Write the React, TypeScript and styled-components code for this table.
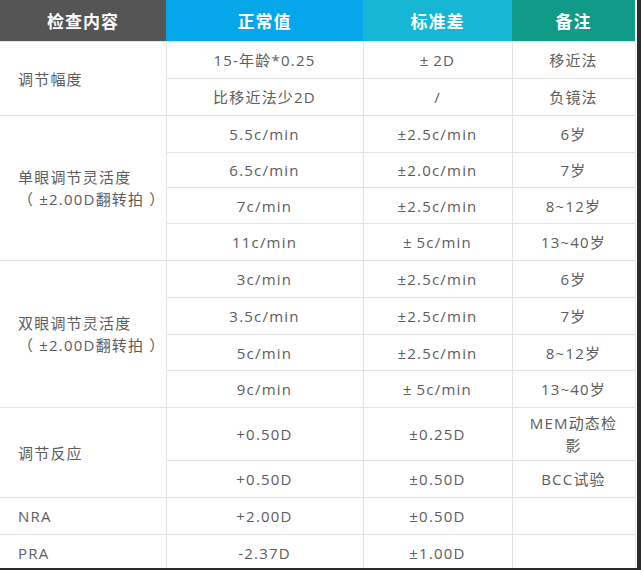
import styled, { createGlobalStyle } from "styled-components";

const GlobalStyle = createGlobalStyle`
  html, body {
    margin: 0;
    padding: 0;
    background: #ffffff;
  }
`;

const Frame = styled.div`
  width: 641px;
  height: 570px;
  box-sizing: border-box;
  border-right: 4px solid #2b2b2b;
  border-bottom: 2px solid #2b2b2b;
  padding-right: 2px;
  background: #ffffff;
  overflow: hidden;
`;

const Table = styled.table`
  width: 635px;
  border-collapse: collapse;
  table-layout: fixed;
  font-family: "Open Sans", "Noto Sans CJK SC", sans-serif;
  color: #5c5c5c;
`;

const HeadCell = styled.th<{ $bg: string }>`
  height: 41px;
  padding: 0;
  background: ${(p) => p.$bg};
  color: #ffffff;
  font-family: "Noto Sans CJK SC", sans-serif;
  font-size: 17px;
  font-weight: 700;
  letter-spacing: 1px;
  text-align: center;
  vertical-align: middle;
`;

const Cell = styled.td<{ $h?: number; $left?: boolean }>`
  height: ${(p) => p.$h ?? 37}px;
  padding: ${(p) => (p.$left ? "0 0 0 18px" : "0 6px")};
  box-sizing: border-box;
  border: 1px solid #e3e3e3;
  font-size: 15px;
  letter-spacing: 1.2px;
  line-height: 22px;
  text-align: ${(p) => (p.$left ? "left" : "center")};
  vertical-align: middle;
  &:first-child {
    border-left: none;
  }
`;

type Row = { normal: string; sd: string; note: string; h?: number };
type Group = { label: string[]; rows: Row[] };

// thin space after the ± where the source spreads it out
const T = "\u2009";

const groups: Group[] = [
  {
    label: ["调节幅度"],
    rows: [
      { normal: "15-年龄*0.25", sd: `±${T}2D`, note: "移近法" },
      { normal: "比移近法少2D", sd: "/", note: "负镜法" },
    ],
  },
  {
    label: ["单眼调节灵活度", "（ ±2.00D翻转拍 ）"],
    rows: [
      { normal: "5.5c/min", sd: "±2.5c/min", note: "6岁" },
      { normal: "6.5c/min", sd: "±2.0c/min", note: "7岁", h: 35 },
      { normal: "7c/min", sd: "±2.5c/min", note: "8~12岁", h: 36 },
      { normal: "11c/min", sd: `±${T}5c/min`, note: "13~40岁" },
    ],
  },
  {
    label: ["双眼调节灵活度", "（ ±2.00D翻转拍 ）"],
    rows: [
      { normal: "3c/min", sd: "±2.5c/min", note: "6岁" },
      { normal: "3.5c/min", sd: "±2.5c/min", note: "7岁" },
      { normal: "5c/min", sd: "±2.5c/min", note: "8~12岁", h: 36 },
      { normal: "9c/min", sd: `±${T}5c/min`, note: "13~40岁" },
    ],
  },
  {
    label: ["调节反应"],
    rows: [
      { normal: "+0.50D", sd: "±0.25D", note: "MEM动态检\n影", h: 53 },
      { normal: "+0.50D", sd: "±0.50D", note: "BCC试验" },
    ],
  },
  { label: ["NRA"], rows: [{ normal: "+2.00D", sd: "±0.50D", note: "", h: 36 }] },
  { label: ["PRA"], rows: [{ normal: "-2.37D", sd: "±1.00D", note: "", h: 35 }] },
];

function Note({ text }: { text: string }) {
  const parts = text.split("\n");
  return (
    <>
      {parts.map((p, i) => (
        <span key={i}>
          {i > 0 && <br />}
          {p}
        </span>
      ))}
    </>
  );
}

export default function App() {
  return (
    <>
      <GlobalStyle />
      <Frame>
        <Table>
          <colgroup>
            <col style={{ width: 166 }} />
            <col style={{ width: 197 }} />
            <col style={{ width: 149 }} />
            <col style={{ width: 123 }} />
          </colgroup>
          <thead>
            <tr>
              <HeadCell $bg="#565556">检查内容</HeadCell>
              <HeadCell $bg="#06a6ea">正常值</HeadCell>
              <HeadCell $bg="#15b7d5">标准差</HeadCell>
              <HeadCell $bg="#109a88">备注</HeadCell>
            </tr>
          </thead>
          <tbody>
            {groups.map((g) =>
              g.rows.map((r, i) => (
                <tr key={g.label[0] + i}>
                  {i === 0 && (
                    <Cell $left rowSpan={g.rows.length}>
                      {g.label.map((l, j) => (
                        <div key={j}>{l}</div>
                      ))}
                    </Cell>
                  )}
                  <Cell $h={r.h}>{r.normal}</Cell>
                  <Cell $h={r.h}>{r.sd}</Cell>
                  <Cell $h={r.h}>
                    <Note text={r.note} />
                  </Cell>
                </tr>
              ))
            )}
          </tbody>
        </Table>
      </Frame>
    </>
  );
}
